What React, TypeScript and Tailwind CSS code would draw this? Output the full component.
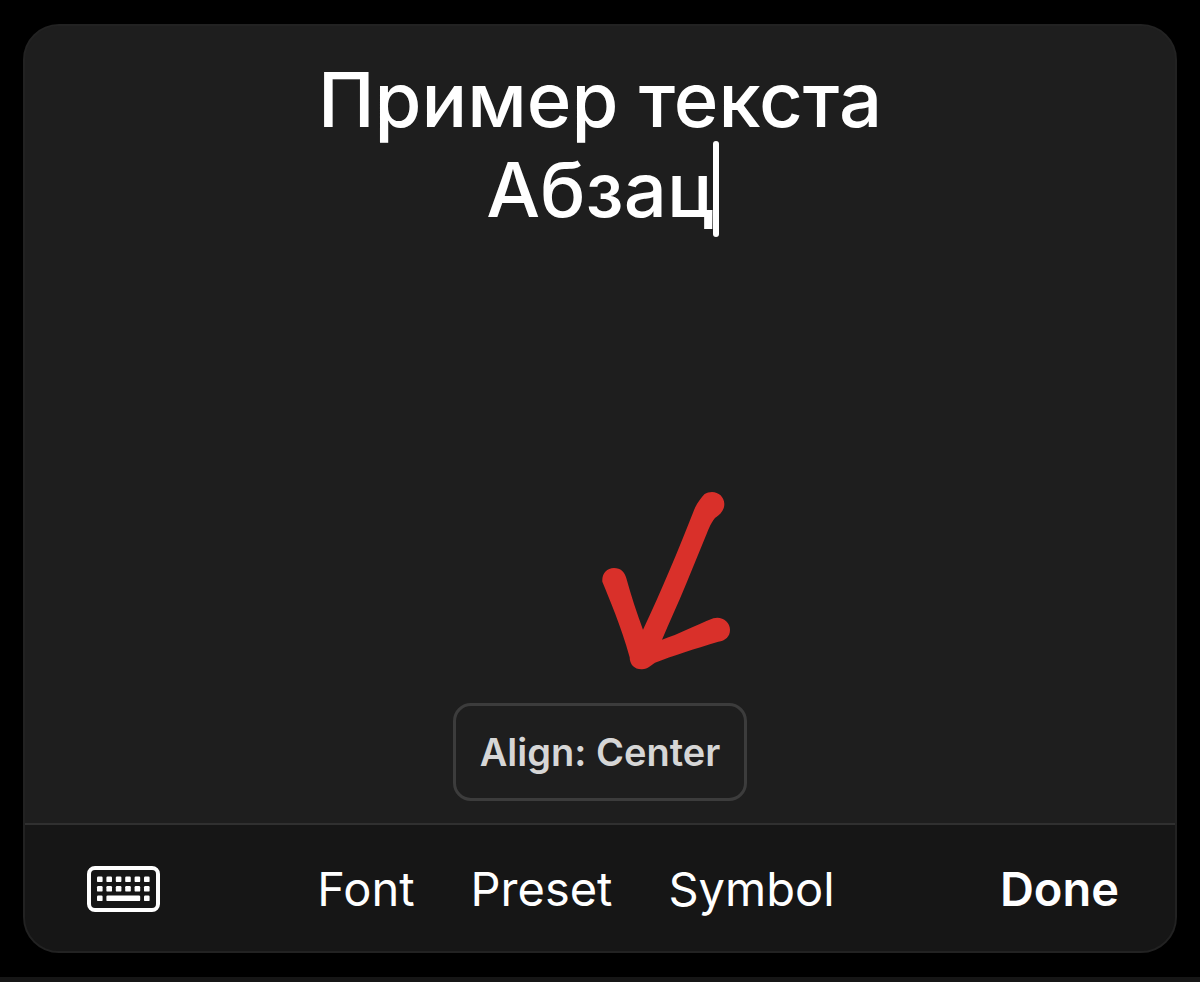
import React, { useState } from 'react';

const tools = ['Font', 'Preset', 'Symbol'];
const alignments = ['Left', 'Center', 'Right'];

const KeyboardIcon = () => (
  <svg width="73" height="46" viewBox="0 0 73 46" fill="white" aria-hidden="true">
    <rect x="2" y="2" width="69" height="42" rx="6" fill="none" stroke="white" strokeWidth="4" />
    {[10, 19.4, 28.8, 38.2, 47.6, 57].map((x) => (
      <React.Fragment key={x}>
        <rect x={x} y="10.5" width="5.6" height="5.6" rx="1.2" />
        <rect x={x} y="20" width="5.6" height="5.6" rx="1.2" />
      </React.Fragment>
    ))}
    <rect x="10" y="29.5" width="5.6" height="5.6" rx="1.2" />
    <rect x="19.4" y="29.5" width="33.8" height="5.6" rx="1.2" />
    <rect x="57" y="29.5" width="5.6" height="5.6" rx="1.2" />
  </svg>
);

const Arrow = () => (
  <svg
    width="170"
    height="210"
    viewBox="0 0 510 630"
    className="absolute -top-56 left-32 pointer-events-none"
    fill="#d9302a"
    aria-hidden="true"
  >
    <path d="M64 308 C62 284 77 267 99 267 C119 267 131 279 136 298 C150 349 167 401 186 452 C242 334 291 216 342 86 C350 70 361 56 370 46 C396 28 430 45 430 75 C430 93 419 106 402 117 C387 136 381 155 374 172 L315 316 C291 374 265 431 243 482 C296 465 340 440 397 418 C422 410 447 429 447 452 C447 473 433 485 412 488 C345 508 273 531 222 551 C210 558 202 569 183 571 C161 572 146 557 146 535 C133 487 117 443 102 403 C90 370 76 338 64 308 Z" />
  </svg>
);

const App = () => {
  const [text, setText] = useState('Пример текста\nАбзац');
  const [align, setAlign] = useState(1);

  return (
    <div className="min-h-screen bg-black flex flex-col text-white font-['Inter',sans-serif]">
      <main className="flex-1 flex flex-col mx-[23px] my-6 rounded-[36px] border-2 border-[#222222] bg-[#1e1e1e] overflow-hidden">
        <div className="flex-1 flex flex-col items-center pt-7 pb-[22px]">
          <div className="relative w-full flex-1 flex">
            <textarea
              aria-label="Text"
              value={text}
              onChange={(e) => setText(e.target.value)}
              className="w-full resize-none bg-transparent text-center text-[76px] leading-[90px] font-medium caret-transparent outline-none"
            />
            {/* caret */}
            <span className="absolute left-1/2 top-[87px] ml-[113px] w-[6px] h-24 rounded-full bg-white" />
          </div>
          <div className="relative">
            <Arrow />
            <button
              onClick={() => setAlign((align + 1) % alignments.length)}
              className="h-[98px] px-6 rounded-[18px] border-3 border-[#3c3c3c] text-[38px] font-semibold text-[#d6d6d6]"
            >
              Align: {alignments[align]}
            </button>
          </div>
        </div>

        <footer className="h-32 shrink-0 flex items-center justify-between pl-[62px] pr-14 pt-[2px] bg-[#161616] border-t-2 border-[#303030] text-[47px]">
          <button aria-label="Keyboard">
            <KeyboardIcon />
          </button>
          <nav className="flex gap-14">
            {tools.map((tool) => (
              <button key={tool}>{tool}</button>
            ))}
          </nav>
          <button className="font-semibold pl-2">Done</button>
        </footer>
      </main>
      <div className="h-[5px] bg-[#161616]" />
    </div>
  );
};

export default App;
